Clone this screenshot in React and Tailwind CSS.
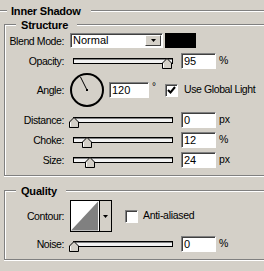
import React from "react";

const font = { fontFamily: '"Liberation Sans", Arial, sans-serif' };

const sunken = "border border-t-[#808080] border-l-[#808080] border-r-white border-b-white shadow-[inset_1px_1px_0_#404040] bg-white";

function Etch({ className = "" }) {
    return <div className={`h-[2px] border-t border-[#808080] bg-white ${className}`} />;
}

function Label({ children }) {
    return (
        <div className="w-[59px] shrink-0 text-right text-[10.5px] tracking-[-0.4px] text-black leading-[12px]">
            {children}
        </div>
    );
}

function Field({ value, w = "w-[35px]" }) {
    return (
        <div className={`${sunken} ${w} h-[16px] pl-[2px] text-[11px] leading-[14px] text-black`}>
            {value}
        </div>
    );
}

function Thumb({ left }) {
    return (
        <svg
            width="10"
            height="11"
            viewBox="0 0 10 11"
            className="absolute top-[-1px]"
            style={{ left }}
        >
            <polygon points="0.5,10.5 0.5,5 5,0.5 9.5,5 9.5,10.5" fill="#d4d0c8" stroke="#000" />
            <line x1="1.5" y1="5.4" x2="1.5" y2="9.5" stroke="#fff" />
        </svg>
    );
}

function SliderRow({ label, value, unit, thumb }) {
    return (
        <div className="flex h-[20px] items-center">
            <Label>{label}</Label>
            <div className="relative ml-[9px] h-[6px] w-[100px] border border-black bg-[#f2f2f2] shadow-[inset_0_1px_0_#808080]">
                <Thumb left={thumb} />
            </div>
            <div className="ml-[8px]">
                <Field value={value} />
            </div>
            <span className="ml-[3px] text-[10.5px] text-black">{unit}</span>
        </div>
    );
}

function Checkbox({ checked }) {
    return (
        <div className={`${sunken} flex h-[13px] w-[13px] shrink-0 items-center justify-center`}>
            {checked && (
                <svg width="9" height="9" viewBox="0 0 9 9">
                    <path d="M1 4 L3.5 6.5 L8 1" fill="none" stroke="#000" strokeWidth="2" />
                </svg>
            )}
        </div>
    );
}

function Group({ title, className = "", children }) {
    return (
        <div className={`ml-[4px] flex flex-col border-l border-b border-[#808080] shadow-[inset_1px_0_0_#fff,0_1px_0_#fff] ${className}`}>
            <div className="-mt-[6px] flex h-[14px] items-center">
                <Etch className="w-[11px]" />
                <span className="ml-[5px] text-[11px] font-bold tracking-[-0.2px] text-black">{title}</span>
                <Etch className="ml-[9px] flex-1" />
            </div>
            {children}
        </div>
    );
}

export default function App() {
    return (
        <div className="h-[271px] w-[264px] overflow-hidden bg-[#d4d0c8] select-none" style={font}>
            {/* dialog title */}
            <div className="mt-[4px] flex h-[14px] items-center">
                <Etch className="w-[7px]" />
                <span className="ml-[4px] text-[11px] font-bold tracking-[-0.2px] text-black">Inner Shadow</span>
                <Etch className="ml-[10px] flex-1" />
            </div>

            <Group title="Structure" className="mt-[6px] pb-[5px]">
                <div className="mt-[1px] flex h-[15px] items-center">
                    <Label>Blend Mode:</Label>
                    <div className={`${sunken} ml-[6px] flex h-[15px] w-[93px] items-center`}>
                        <span className="flex-1 pl-[2px] text-[11px] leading-[13px] text-black">Normal</span>
                        <div className="mr-[1px] flex h-[11px] w-[16px] items-center justify-center border border-t-white border-l-white border-r-[#404040] border-b-[#404040] bg-[#d4d0c8]">
                            <svg width="5" height="3" viewBox="0 0 5 3">
                                <polygon points="0,0 5,0 2.5,3" fill="#000" />
                            </svg>
                        </div>
                    </div>
                    <div className="ml-[2px] h-[15px] w-[31px] bg-black" />
                </div>

                <div className="mt-[5px] flex h-[16px] items-center">
                    <Label>Opacity:</Label>
                    <div className="relative ml-[9px] h-[6px] w-[100px] border border-black bg-[#f2f2f2] shadow-[inset_0_1px_0_#808080]">
                        <Thumb left={88} />
                    </div>
                    <div className="ml-[8px]">
                        <Field value="95" />
                    </div>
                    <span className="ml-[3px] text-[10.5px] text-black">%</span>
                </div>

                <div className="mt-[4px] flex h-[34px] items-center">
                    <Label>Angle:</Label>
                    <svg width="34" height="34" viewBox="0 0 34 34" className="ml-[6px] shrink-0">
                        <circle cx="17" cy="17" r="16" fill="none" stroke="#000" strokeWidth="2" />
                        <line x1="17" y1="17" x2="10.5" y2="4" stroke="#000" strokeWidth="1" />
                        <rect x="16" y="16" width="2" height="2" fill="#000" />
                    </svg>
                    <div className="ml-[5px]">
                        <Field value="120" w="w-[40px]" />
                    </div>
                    <span className="w-[16px] self-start pt-[9px] pl-[3px] text-[10px] leading-[10px] text-black">°</span>
                    <Checkbox checked />
                    <span className="ml-[6px] whitespace-nowrap text-[10.5px] tracking-[-0.4px] text-black">Use Global Light</span>
                </div>

                <div className="mt-[3px]">
                    <SliderRow label="Distance:" value="0" unit="px" thumb={-5} />
                    <SliderRow label="Choke:" value="12" unit="%" thumb={8} />
                    <SliderRow label="Size:" value="24" unit="px" thumb={11} />
                </div>
            </Group>

            <Group title="Quality" className="mt-[14px] pb-[5px]">
                <div className="mt-[2px] flex h-[32px] items-center">
                    <Label>Contour:</Label>
                    <div className="ml-[6px] flex h-[32px] w-[42px] border border-black bg-[#d4d0c8]">
                        <svg width="29" height="30" viewBox="0 0 29 30" className="shrink-0 border-r border-black bg-white">
                            <polygon points="0,30 28,0 28,30" fill="#808080" />
                        </svg>
                        <div className="flex flex-1 items-center justify-center">
                            <svg width="5" height="3" viewBox="0 0 5 3">
                                <polygon points="0,0 5,0 2.5,3" fill="#000" />
                            </svg>
                        </div>
                    </div>
                    <div className="ml-[13px]">
                        <Checkbox />
                    </div>
                    <span className="ml-[5px] text-[10.5px] tracking-[-0.3px] text-black">Anti-aliased</span>
                </div>
                <div className="mt-[2px]">
                    <SliderRow label="Noise:" value="0" unit="%" thumb={-5} />
                </div>
            </Group>
        </div>
    );
}
